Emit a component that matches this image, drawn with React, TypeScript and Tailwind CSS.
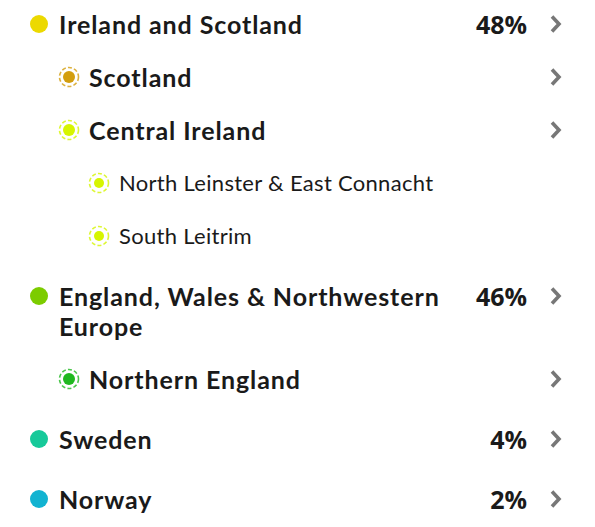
import React from "react";

type Fila = {
  nombre: string;
  nivel: 0 | 1 | 2;
  color: string;
  porcentaje?: string;
  flecha?: boolean;
};

const filas: Fila[] = [
  { nombre: "Ireland and Scotland", nivel: 0, color: "#ecd900", porcentaje: "48%", flecha: true },
  { nombre: "Scotland", nivel: 1, color: "#d39e0e", flecha: true },
  { nombre: "Central Ireland", nivel: 1, color: "#d6f500", flecha: true },
  { nombre: "North Leinster & East Connacht", nivel: 2, color: "#d6f500" },
  { nombre: "South Leitrim", nivel: 2, color: "#d6f500" },
  { nombre: "England, Wales & Northwestern Europe", nivel: 0, color: "#7ccc00", porcentaje: "46%", flecha: true },
  { nombre: "Northern England", nivel: 1, color: "#1fb81f", flecha: true },
  { nombre: "Sweden", nivel: 0, color: "#17c99a", porcentaje: "4%", flecha: true },
  { nombre: "Norway", nivel: 0, color: "#12b3d1", porcentaje: "2%", flecha: true },
];

const Punto = ({ color }: { color: string }) => (
  <span className="w-[18px] h-[18px] rounded-full shrink-0" style={{ backgroundColor: color }} />
);

const PuntoSub = ({ color, chico }: { color: string; chico?: boolean }) => (
  <svg width="22" height="22" viewBox="0 0 22 22" className="shrink-0">
    <circle cx="11" cy="11" r="9.5" fill="none" stroke={color} strokeWidth="1.6" strokeDasharray="4 2.2" opacity="0.8" />
    <circle cx="11" cy="11" r={chico ? 5 : 6} fill={color} />
  </svg>
);

const Flecha = () => (
  <svg width="14" height="20" viewBox="0 0 14 20" className="shrink-0">
    <path d="M3 2.5 L10 10 L3 17.5" fill="none" stroke="#777" strokeWidth="3.6" />
  </svg>
);

export default function App() {
  return (
    <div className="w-[595px] h-[527px] bg-white text-[#1a1a1a] font-['Lato','Liberation_Sans',sans-serif] pl-[28px] pr-[32px] pt-[9px]">
      {filas.map((f, i) => (
        <div
          key={i}
          className={`flex items-start pb-[23px] ${f.nivel === 0 && i > 0 ? "mt-[7px]" : ""}`}
        >
          <div
            className={`flex items-start flex-1 ${
              f.nivel === 1 ? "pl-[30px]" : f.nivel === 2 ? "pl-[60px]" : ""
            }`}
          >
            <div className="h-[30px] flex items-center w-[22px] justify-center mr-[9px] shrink-0">
              {f.nivel === 0 ? <Punto color={f.color} /> : <PuntoSub color={f.color} chico={f.nivel === 2} />}
            </div>
            <span
              className={`max-w-[390px] leading-[30px] ${
                f.nivel === 2
                  ? "text-[22px] font-normal tracking-[0.3px]"
                  : "text-[25px] font-bold tracking-[0.9px]"
              }`}
            >
              {f.nombre}
            </span>
          </div>
          {f.porcentaje && (
            <span className="leading-[30px] text-[25px] font-bold font-['Open_Sans','Liberation_Sans',sans-serif]">
              {f.porcentaje}
            </span>
          )}
          <div className="h-[30px] flex items-center w-[14px] ml-[22px]">{f.flecha && <Flecha />}</div>
        </div>
      ))}
    </div>
  );
}
